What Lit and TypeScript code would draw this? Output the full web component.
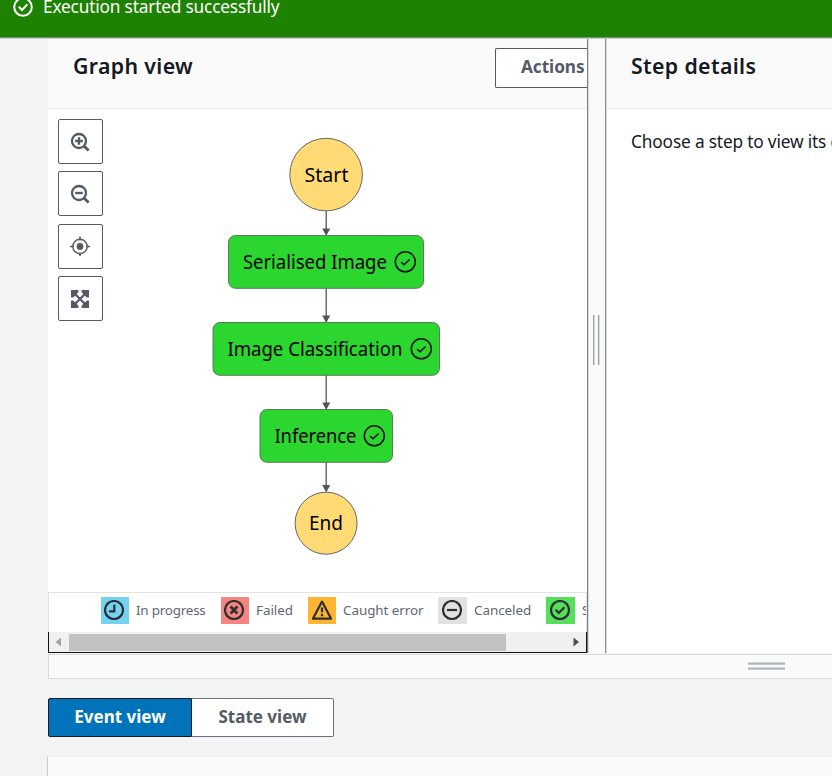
import { LitElement, html, svg, css } from "lit";
import { customElement } from "lit/decorators.js";

type Box = { y: number; x: number; w: number; label: string; textW: number };

const boxes: Box[] = [
  { y: 127.5, x: 180.5, w: 195, label: "Serialised Image", textW: 144 },
  { y: 214.5, x: 165, w: 226.5, label: "Image Classification", textW: 175 },
  { y: 301.5, x: 212, w: 132.5, label: "Inference", textW: 82 },
];

const arrows: [number, number][] = [
  [102, 127],
  [179, 214],
  [266, 301],
  [353, 383.5],
];

const glyphs = {
  progress: svg`<circle cx="10" cy="10" r="9" /><path d="M10.3 4.8V11.3H5" />`,
  failed: svg`<circle cx="10" cy="10" r="9" /><path d="M6.6 6.6l6.8 6.8M13.4 6.6l-6.8 6.8" stroke-width="2.8" />`,
  caught: svg`<path d="M10 1.6L19 18.6H1Z" stroke-linejoin="round" /><path d="M10 7.4v4.8M10 13.8v2.4" />`,
  canceled: svg`<circle cx="10" cy="10" r="9" /><path d="M5 10h10" />`,
  succeeded: svg`<circle cx="10" cy="10" r="9" /><path d="M5.6 9.8l3.2 3.2 5.6-5.8" />`,
};

const legend = [
  { kind: "progress", label: "In progress", glyph: glyphs.progress },
  { kind: "failed", label: "Failed", glyph: glyphs.failed },
  { kind: "caught", label: "Caught error", glyph: glyphs.caught },
  { kind: "canceled", label: "Canceled", glyph: glyphs.canceled },
  { kind: "succeeded", label: "Succeeded", glyph: glyphs.succeeded },
];

const tools = [
  svg`<circle cx="9" cy="9" r="7" stroke-width="2.3" /><path d="M14 14l4.6 4.6" stroke-width="2.8" /><path d="M5.2 9h7.6M9 5.2v7.6" stroke-width="2.4" />`,
  svg`<circle cx="9" cy="9" r="7" stroke-width="2.3" /><path d="M14 14l4.6 4.6" stroke-width="2.8" /><path d="M5.2 9h7.6" stroke-width="2.4" />`,
  svg`<circle cx="10" cy="10.5" r="7.2" stroke-width="1.4" /><circle cx="10" cy="10.5" r="3.4" fill="#545b64" stroke="none" /><path d="M10 0.5v4M10 16.5v3.5M0 10.5h4M16 10.5h4" stroke-width="1.6" />`,
  svg`<path d="M4 4l12 12M16 4L4 16" stroke-width="2.3" /><path d="M1 1H8.4V3.2L3.2 8.4H1ZM19 1H11.6V3.2L16.8 8.4H19ZM1 19H8.4V16.8L3.2 11.6H1ZM19 19H11.6V16.8L16.8 11.6H19Z" fill="#545b64" stroke="none" />`,
];

@customElement("app-root")
export class AppRoot extends LitElement {
  static styles = css`
    :host {
      display: flex;
      flex-direction: column;
      width: 832px;
      height: 776px;
      overflow: hidden;
      background: #f2f3f3;
      color: #16191f;
      font-family: "Noto Sans", "Open Sans", sans-serif;
      white-space: nowrap;
    }
    * { box-sizing: border-box; }
    svg { display: block; flex: none; }
    .banner {
      flex: none;
      height: 39px;
      display: flex;
      align-items: flex-start;
      gap: 10px;
      padding-left: 13px;
      background: #1d8102;
      border-bottom: 1px solid #c9cccb;
      box-shadow: inset 0 -1px #79907a;
      color: #fff;
      font-size: 17.3px;
      line-height: 24px;
    }
    .banner svg { margin-top: -3px; }
    .banner span { margin-top: -5px; letter-spacing: -0.19px; }
    .panels { flex: none; display: flex; height: 614px; margin-left: 48px; }
    .graph { width: 539px; overflow: hidden; background: #fff; display: flex; flex-direction: column; }
    .head {
      flex: none;
      height: 70px;
      display: flex;
      align-items: flex-start;
      justify-content: space-between;
      background: #fafafa;
      border-bottom: 1px solid #eaeded;
      padding: 9px 0 0 25px;
    }
    h2 { margin: 3px 0 0; font-size: 21.3px; line-height: 30px; font-weight: 650; }
    .gv { letter-spacing: 0.35px; }
    .sd { letter-spacing: 0.35px; }
    .actions {
      flex: none;
      width: 92px;
      height: 40px;
      border: 1px solid #545b64;
      border-right: 0;
      border-radius: 2px 0 0 2px;
      background: #fff;
      color: #545b64;
      font-size: 17.2px;
      font-weight: 700;
      line-height: 36px;
      padding-left: 25px;
      letter-spacing: -0.05px;
    }
    .canvas { flex: none; position: relative; height: 483px; }
    .diagram { position: absolute; left: 0; top: 0; }
    .tools { position: absolute; left: 10px; top: 10px; display: grid; gap: 7.4px; }
    .tool {
      width: 45px;
      height: 45px;
      border: 1px solid #545b64;
      border-radius: 2px;
      background: #fff;
      display: grid;
      place-items: center;
      padding: 0 1px 0 0;
    }
    .legend {
      flex: none;
      height: 40px;
      display: grid;
      grid-template-columns: 120px 87px 130px 108px 120px;
      padding: 4px 0 0 52px;
      border: 1px solid #e0e3e3;
      border-bottom: 0;
      overflow: hidden;
      color: #5f6670;
      font-size: 13.4px;
      letter-spacing: -0.04px;
    }
    .entry { display: flex; gap: 7px; height: 27px; line-height: 27px; }
    .entry:first-child { letter-spacing: -0.2px; }
    .chip { flex: none; width: 28px; height: 27px; display: grid; place-items: center; padding: 0 2px 1px 0; }
    .progress { background: #75d3f2; }
    .failed { background: #f78482; }
    .caught { background: #ffb532; padding-right: 0; }
    .canceled { width: 29px; padding-right: 1px; background: #e2e2e2; }
    .succeeded { width: 29px; padding-right: 1px; background: #55df5a; }
    .scroll {
      flex: none;
      height: 21px;
      display: flex;
      justify-content: space-between;
      background: #f0f0f0;
      border: 1px solid #111;
      border-top: 0;
      padding: 2px 7px 1px 6px;
    }
    .scroll svg { margin-top: 3px; }
    .thumb { width: 437px; height: 17px; margin-left: 8px; margin-right: auto; background: #c1c1c1; }
    .gutter {
      flex: none;
      width: 19px;
      background: #fafafa;
      border-left: 1px solid #7d8489;
      border-right: 1px solid #879196;
      box-shadow: inset 1px 0 #d5dbdb;
      display: flex;
      align-items: flex-start;
      justify-content: center;
      gap: 3px;
      padding: 276px 1px 0 0;
    }
    .bar { width: 2px; height: 50px; background: #d5dbdb; border-left: 1px solid #95a5a6; }
    .details { flex: 1; background: #fff; border-left: 1px solid #d5dbdb; overflow: hidden; }
    .details .head { padding-left: 24px; }
    .details p { margin: 20px 0 0 24px; font-size: 17.3px; line-height: 26px; letter-spacing: -0.15px; word-spacing: -0.1px; }
    .strip {
      flex: none;
      height: 25px;
      margin: 1px 0 0 48px;
      background: #fafafa;
      border: 1px solid #d5dbdb;
      border-right: 0;
      display: flex;
      flex-direction: column;
      gap: 2px;
      padding: 7px 0 0 699px;
    }
    .grip { width: 37px; height: 3px; background: #aab7b8; border-top: 1px solid #d5dbdb; border-bottom: 1px solid #c0caca; }
    .tabs { flex: none; display: flex; margin: 19px 0 0 48px; height: 39px; font-weight: 700; font-size: 17px; line-height: 36px; }
    .tab { text-align: center; border: 1px solid #687078; background: #fff; color: #545b64; width: 142px; border-left: 0; border-radius: 0 2px 2px 0; }
    .on { width: 144px; background: #0073bb; border: 1px solid #16191f; color: #fff; border-radius: 2px 0 0 2px; }
    .bottom { flex: 1; margin: 19px 0 0 47px; background: #fafafa; border-left: 1px solid #c5cccc; border-top: 1px solid #eaeded; }
  `;

  private diagram() {
    return svg`
      <g stroke="#545454" stroke-width="1.3">
        ${arrows.map(
          ([a, b]) => svg`<path d="M278.2 ${a}V${b - 6}" /><path d="M274.2 ${b - 7.5}H282.2L278.2 ${b}Z" fill="#545454" stroke="none" />`,
        )}
      </g>
      <g fill="#ffda75" stroke="#666" stroke-width="1">
        <circle cx="278.1" cy="65.6" r="36.3" /><circle cx="278.1" cy="414.2" r="31" />
      </g>
      <g font-size="19">
        <text x="256.5" y="73" textLength="44" lengthAdjust="spacingAndGlyphs">Start</text>
        <text x="261" y="421" textLength="34" lengthAdjust="spacingAndGlyphs">End</text>
        ${boxes.map(
          (b) => svg`
          <rect x=${b.x} y=${b.y - 1} width=${b.w} height="52.8" rx="7" fill="#2bd62e" stroke="#5b7a5b" />
          <text x=${b.x + 14.4} y=${b.y + 32.5} textLength=${b.textW} lengthAdjust="spacingAndGlyphs">${b.label}</text>
          <g fill="none" stroke="#111" stroke-width="1.5">
            <circle cx=${b.x + b.w - 18.2} cy=${b.y + 25.3} r="10" />
            <path d="M${b.x + b.w - 22.4} ${b.y + 25.6}l3 2.6 5.5-5.2" />
          </g>`,
        )}
      </g>`;
  }

  render() {
    return html`
      <div class="banner">
        <svg width="20" height="20" viewBox="0 0 20 20" fill="none" stroke="#fff" stroke-width="2">
          <circle cx="10" cy="10" r="8.8" /><path d="M5.8 9.8l3.2 3.2 5.4-5.7" />
        </svg>
        <span>Execution started successfully</span>
      </div>
      <div class="panels">
        <section class="graph">
          <div class="head"><h2 class="gv">Graph view</h2><div class="actions">Actions</div></div>
          <div class="canvas">
            <svg class="diagram" width="539" height="483">${this.diagram()}</svg>
            <div class="tools">
              ${tools.map(
                (t) => html`<div class="tool"><svg width="20" height="20" viewBox="0 0 20 20" fill="none" stroke="#545b64">${t}</svg></div>`,
              )}
            </div>
          </div>
          <div class="legend">
            ${legend.map(
              (l) => html`<div class="entry">
                <div class="chip ${l.kind}"><svg width="20" height="20" viewBox="0 0 20 20" fill="none" stroke="#2d3033" stroke-width="2.2">${l.glyph}</svg></div>
                <span>${l.label}</span>
              </div>`,
            )}
          </div>
          <div class="scroll">
            <svg width="6" height="10"><path d="M6 0.5V9.5L0.5 5Z" fill="#a3a3a3" /></svg>
            <div class="thumb"></div>
            <svg width="6" height="10"><path d="M0.5 0.5V9.5L6 5Z" fill="#505050" /></svg>
          </div>
        </section>
        <div class="gutter"><div class="bar"></div><div class="bar"></div></div>
        <section class="details">
          <div class="head"><h2 class="sd">Step details</h2></div>
          <p>Choose a step to view its details.</p>
        </section>
      </div>
      <div class="strip"><div class="grip"></div><div class="grip"></div></div>
      <div class="tabs"><div class="tab on">Event view</div><div class="tab">State view</div></div>
      <div class="bottom"></div>
    `;
  }
}
